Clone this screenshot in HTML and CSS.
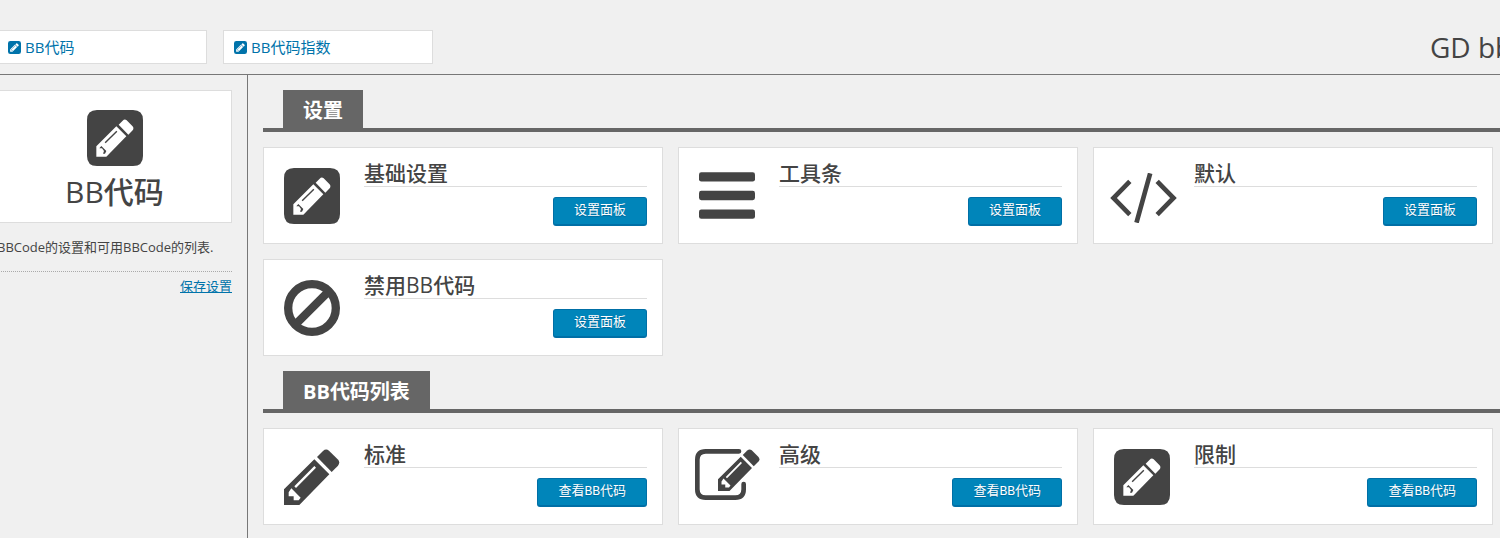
FILE: index.html
```html
<!DOCTYPE html>
<html lang="zh-CN">
<head>
<meta charset="utf-8">
<meta name="viewport" content="width=device-width, initial-scale=1">
<title>BB代码</title>
<link rel="stylesheet" href="styles.css">
</head>
<body>
<svg class="sprite" aria-hidden="true">
  <symbol id="pencil" viewBox="0 0 168 168">
    <path fill-rule="evenodd" d="M0 168V121L91 31L136 76L46 168ZM31 112L36 117L96 56L91 51ZM14 130L22 118L50 146L44 154H29V142H14Z"/>
    <path d="M99 24L117 6Q126-2 135 5L161 31Q170 40 162 50L143 69Z"/>
  </symbol>
  <symbol id="square" viewBox="0 0 168 168">
    <path fill-rule="evenodd" d="M30 0H138Q168 0 168 30V138Q168 168 138 168H30Q0 168 0 138V30Q0 0 30 0ZM28 140V109L88 49L118 79L58 140ZM95 44L107 32Q113 26 119 31L136 48Q142 54 137 61L124 74Z"/>
    <path d="M53 97L88 62L91 65L56 100ZM37 115L43 108L58 123L54 131H48L51 123L45 115Z"/>
  </symbol>
  <symbol id="bars" viewBox="0 0 168 140">
    <rect width="168" height="28" rx="7"/><rect y="56" width="168" height="28" rx="7"/><rect y="112" width="168" height="28" rx="7"/>
  </symbol>
  <symbol id="code" viewBox="0 0 200 150">
    <path class="line" d="M59 25L10 75L59 125M141 25L190 75L141 125M120 1L79 149"/>
  </symbol>
  <symbol id="ban" viewBox="0 0 168 168">
    <path class="line wide" d="M155.500 84A71.500 71.500 0 1 1 12.500 84A71.500 71.500 0 1 1 155.500 84ZM34 134L134 34"/>
  </symbol>
  <symbol id="edit" viewBox="0 0 195 153">
    <path class="line round" d="M132 7H32Q7 7 7 32V121Q7 146 32 146H121Q146 146 146 121V105"/>
    <use href="#pencil" x="69" y="0" width="126" height="126"/>
  </symbol>
</svg>

<div class="page">
  <header class="header">
    <nav class="tabs">
      <a class="tab" href="#codes"><svg class="tab-icon"><use href="#square"/></svg>BB代码</a>
      <a class="tab" href="#index"><svg class="tab-icon"><use href="#square"/></svg>BB代码指数</a>
    </nav>
    <div class="product">GD bb</div>
  </header>
  <div class="layout">
    <aside class="sidebar">
      <div class="summary">
        <svg class="icon"><use href="#square"/></svg>
        <h1 class="summary-title">BB代码</h1>
      </div>
      <p class="about">BBCode的设置和可用BBCode的列表.</p>
      <div class="save"><a href="#save">保存设置</a></div>
    </aside>
    <main class="main">
      <section class="section">
        <div class="section-head"><h2 class="section-title">设置</h2></div>
        <div class="cards">
          <article class="card">
            <div class="card-icon"><svg class="icon"><use href="#square"/></svg></div>
            <div class="card-body"><h3 class="card-title">基础设置</h3><button class="button" type="button">设置面板</button></div>
          </article>
          <article class="card">
            <div class="card-icon"><svg class="icon icon-bars"><use href="#bars"/></svg></div>
            <div class="card-body"><h3 class="card-title">工具条</h3><button class="button" type="button">设置面板</button></div>
          </article>
          <article class="card">
            <div class="card-icon"><svg class="icon icon-code"><use href="#code"/></svg></div>
            <div class="card-body"><h3 class="card-title">默认</h3><button class="button" type="button">设置面板</button></div>
          </article>
          <article class="card">
            <div class="card-icon"><svg class="icon"><use href="#ban"/></svg></div>
            <div class="card-body"><h3 class="card-title">禁用BB代码</h3><button class="button" type="button">设置面板</button></div>
          </article>
        </div>
      </section>
      <section class="section">
        <div class="section-head"><h2 class="section-title">BB代码列表</h2></div>
        <div class="cards">
          <article class="card">
            <div class="card-icon"><svg class="icon"><use href="#pencil"/></svg></div>
            <div class="card-body"><h3 class="card-title">标准</h3><button class="button" type="button">查看BB代码</button></div>
          </article>
          <article class="card">
            <div class="card-icon"><svg class="icon icon-edit"><use href="#edit"/></svg></div>
            <div class="card-body"><h3 class="card-title">高级</h3><button class="button" type="button">查看BB代码</button></div>
          </article>
          <article class="card">
            <div class="card-icon"><svg class="icon"><use href="#square"/></svg></div>
            <div class="card-body"><h3 class="card-title">限制</h3><button class="button" type="button">查看BB代码</button></div>
          </article>
        </div>
      </section>
    </main>
  </div>
</div>
</body>
</html>
```
FILE: styles.css
```css
* {
  box-sizing: border-box;
}

body {
  margin: 0;
  background: #f0f0f0;
  color: #444;
  font: 13px/20px "Open Sans", "Noto Sans CJK SC", sans-serif;
  overflow: hidden;
}

h1, h2, h3, p {
  margin: 0;
}

a {
  color: #0073aa;
}

.sprite {
  position: absolute;
  width: 0;
  height: 0;
}

.line {
  fill: none;
  stroke: currentColor;
  stroke-width: 14px;
}

.wide {
  stroke-width: 25px;
}

.round {
  stroke-linecap: round;
}

.page {
  display: flex;
  flex-direction: column;
  min-height: 100vh;
  margin-left: -3px;
}

.header {
  display: flex;
  align-items: flex-end;
  justify-content: space-between;
  padding-top: 30px;
  padding-bottom: 10px;
  border-bottom: 1px solid #777;
}

.tabs {
  display: flex;
  gap: 16px;
}

.tab {
  display: flex;
  align-items: center;
  gap: 4px;
  width: 210px;
  height: 34px;
  padding: 0 10px;
  border: 1px solid #ddd;
  background: #fff;
  font-size: 15px;
  text-decoration: none;
}

.tab-icon {
  width: 13px;
  height: 13px;
  fill: currentColor;
}

.product {
  width: 70px;
  font-size: 28px;
  line-height: 34px;
  white-space: nowrap;
}

.layout {
  display: flex;
  flex: 1;
}

.sidebar {
  flex: 0 0 251px;
  padding: 15px 15px 0 0;
  border-right: 1px solid #777;
}

.summary {
  display: flex;
  flex-direction: column;
  align-items: center;
  padding: 19px 0 5px;
  border: 1px solid #ddd;
  background: #fff;
}

.summary-title {
  font-size: 30px;
  font-weight: 500;
  line-height: 51px;
}

.about {
  padding: 14px 0;
  border-bottom: 1px dotted #aaa;
  white-space: nowrap;
}

.save {
  padding-top: 4px;
  text-align: right;
}

.icon {
  width: 56px;
  height: 56px;
  color: #444;
  fill: currentColor;
}

.icon-bars {
  height: 47px;
}

.icon-code {
  width: 67px;
  height: 50px;
  margin: 4px 0 0 2px;
}

.icon-edit {
  width: 65px;
  height: 51px;
  margin-bottom: 4px;
}

.main {
  flex: 1;
  min-width: 0;
  padding: 15px 0 0 15px;
}

.section {
  margin-bottom: 15px;
}

.section-head {
  display: flex;
  margin-bottom: 15px;
  padding-left: 20px;
  border-bottom: 4px solid #666;
}

.section-title {
  padding: 4px 20px 0;
  background: #666;
  color: #fff;
  font-size: 20px;
  font-weight: 700;
  line-height: 34px;
}

.cards {
  display: grid;
  grid-template-columns: repeat(auto-fill, minmax(380px, 1fr));
  gap: 15px;
  padding-right: 7px;
}

.card {
  display: flex;
  padding: 15px 15px 17px 0;
  border: 1px solid #ddd;
  background: #fff;
}

.card-icon {
  display: flex;
  flex: 0 0 100px;
  align-items: center;
  justify-content: center;
  padding: 2px 4px 0 0;
}

.card-body {
  display: flex;
  flex: 1;
  flex-direction: column;
  align-items: flex-end;
}

.card-title {
  align-self: stretch;
  margin-bottom: 10px;
  padding-bottom: 2px;
  border-bottom: 1px solid #ddd;
  font-size: 21px;
  font-weight: 500;
  line-height: 21px;
}

.button {
  height: 29px;
  padding: 0 20px;
  border: 1px solid #006fa6;
  border-bottom-width: 2px;
  border-radius: 3px;
  background: #0085ba;
  color: #fff;
  font-family: "Liberation Mono", "Noto Sans CJK SC", monospace;
  font-size: 13px;
  line-height: 26px;
  text-shadow: 0 1px 1px #006799;
  cursor: pointer;
}
```
